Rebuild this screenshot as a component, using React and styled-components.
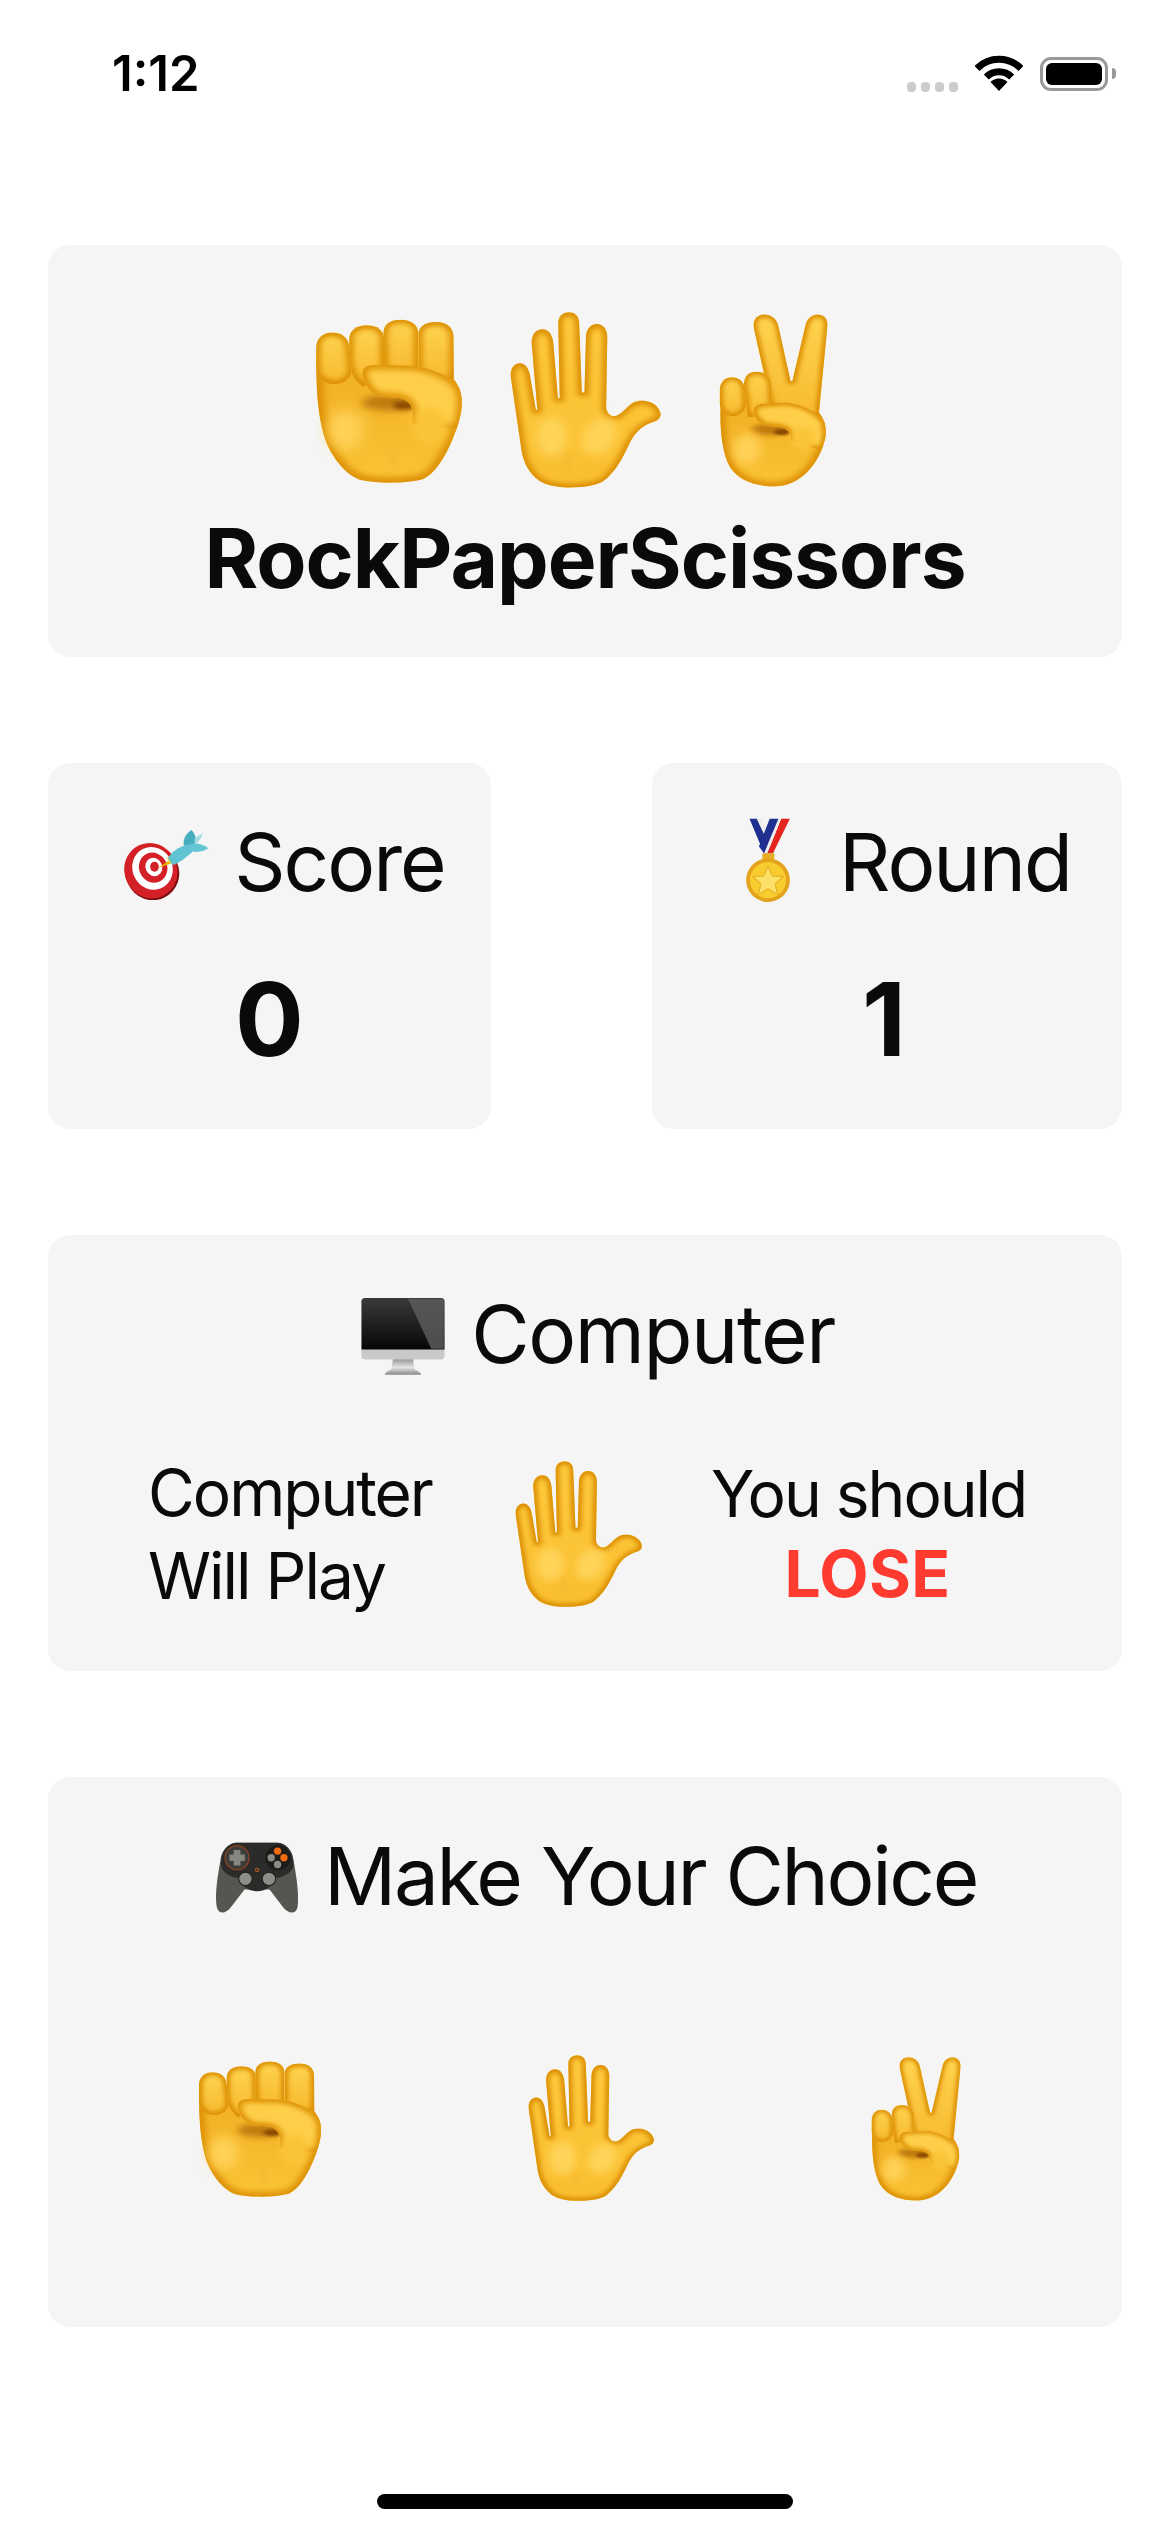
import React, { useId } from "react"
import styled, { createGlobalStyle } from "styled-components"

const GlobalStyle = createGlobalStyle`
  html, body { margin: 0; padding: 0; background: #fff; }
  body { font-family: "Inter", "Liberation Sans", sans-serif; color: #0a0a0a; }
`

const Page = styled.main`
  width: 1170px;
  height: 2532px;
  box-sizing: border-box;
  padding: 0 48px;
  display: flex;
  flex-direction: column;
  overflow: hidden;
`

// STATUS BAR
const StatusBar = styled.header`
  height: 245px;
  box-sizing: border-box;
  padding: 55px 7px 0 64px;
  display: flex;
  align-items: flex-start;
`
const Time = styled.span`
  font-size: 49px;
  line-height: 38px;
  font-weight: 600;
  letter-spacing: 0;
  color: #000;
`
const StatusIcons = styled.div`
  margin-left: auto;
  display: flex;
  align-items: flex-start;
`
const Dots = styled.div`
  display: flex;
  gap: 5px;
  margin: 27px 17px 0 0;
`
const Dot = styled.i`
  width: 9px;
  height: 10px;
  border-radius: 4px;
  background: #ccc;
`
const Battery = styled.div`
  position: relative;
  width: 68px;
  height: 34px;
  box-sizing: border-box;
  margin: 2px 7px 0 17px;
  border: 3.5px solid #999;
  border-radius: 11px;
  padding: 3px;
  &::after {
    content: "";
    position: absolute;
    right: -11px;
    top: 8px;
    width: 4px;
    height: 11px;
    border-radius: 0 4px 4px 0;
    background: #999;
  }
`
const BatteryFill = styled.div`
  height: 100%;
  border-radius: 6px;
  background: #000;
`

// CARDS
const Card = styled.section`
  height: ${(p) => p.$height}px;
  margin-bottom: ${(p) => p.$gap ?? 106}px;
  box-sizing: border-box;
  padding-top: ${(p) => p.$top}px;
  border-radius: 22px;
  background: #f5f5f5;
  display: flex;
  flex-direction: column;
  align-items: center;
`
const HandRow = styled.div`
  display: flex;
  align-items: center;
  gap: ${(p) => p.$gap}px;
  margin: ${(p) => p.$margin};
`
const Title = styled.h1`
  margin: 20px 0 0;
  font-size: 82px;
  line-height: 100px;
  font-weight: 700;
  letter-spacing: -1px;
`
const Stats = styled.div`
  display: flex;
  justify-content: space-between;
  margin-bottom: 106px;
`
const StatCard = styled.section`
  width: ${(p) => p.$width}px;
  height: 366px;
  box-sizing: border-box;
  padding-top: 53px;
  border-radius: 22px;
  background: #f5f5f5;
  display: flex;
  flex-direction: column;
  align-items: center;
`
const Heading = styled.h2`
  margin: 0;
  padding-left: ${(p) => p.$shift ?? 0}px;
  display: flex;
  align-items: center;
  gap: ${(p) => p.$gap}px;
  font-size: 80px;
  line-height: 92px;
  font-weight: 400;
  letter-spacing: ${(p) => p.$spacing ?? -2}px;
  white-space: nowrap;
`
const Value = styled.div`
  margin: 51px ${(p) => p.$nudge ?? 0}px 0 0;
  font-size: 102px;
  line-height: 120px;
  font-weight: 700;
`
const Verdict = styled.div`
  display: flex;
  align-items: center;
  align-self: flex-start;
  margin-top: 71px;
  padding-left: 100px;
`
const Lines = styled.div`
  width: ${(p) => p.$width}px;
  margin-bottom: ${(p) => p.$bottom ?? 0}px;
  font-size: 64px;
  line-height: 83px;
  letter-spacing: -2px;
  white-space: nowrap;
  text-align: ${(p) => p.$align};
`
const Lose = styled.div`
  padding-left: 4px;
  font-size: 64px;
  line-height: 78px;
  font-weight: 700;
  letter-spacing: 0.4px;
  color: #ff3b30;
`
const HomeBar = styled.div`
  width: 416px;
  height: 15px;
  margin: 167px auto 0;
  border-radius: 8px;
  background: #000;
`

// DRAWINGS
const Art = styled.svg`
  display: block;
  flex: none;
  margin: ${(p) => p.$top ?? 0}px 0 ${(p) => p.$bottom ?? 0}px ${(p) => p.$left ?? 0}px;
`

const Skin = ({ d, rim = 24, dark = "#DA8C05", top = "#FFD44F", low = "#F7B92F" }) => {
  const id = useId().replace(/[^a-zA-Z0-9]/g, "")
  return (
    <>
      <defs>
        <linearGradient id={`g${id}`} x1="0" y1="0" x2="0" y2="1">
          <stop offset="0" stopColor={top} />
          <stop offset="1" stopColor={low} />
        </linearGradient>
        <clipPath id={`c${id}`}><path d={d} /></clipPath>
        <filter id={`b${id}`} x="-20%" y="-20%" width="140%" height="140%">
          <feGaussianBlur stdDeviation={rim / 2.6} />
        </filter>
      </defs>
      <path d={d} fill={`url(#g${id})`} />
      <g clipPath={`url(#c${id})`}>
        <path d={d} fill="none" stroke={dark} strokeWidth={rim} filter={`url(#b${id})`} />
      </g>
    </>
  )
}

const Soft = ({ cx, cy, rx, ry, fill, blur = 8, rotate = 0 }) => {
  const id = useId().replace(/[^a-zA-Z0-9]/g, "")
  return (
    <>
      <filter id={`s${id}`} x="-60%" y="-60%" width="220%" height="220%">
        <feGaussianBlur stdDeviation={blur} />
      </filter>
      <ellipse cx={cx} cy={cy} rx={rx} ry={ry} fill={fill} filter={`url(#s${id})`}
        transform={`rotate(${rotate} ${cx} ${cy})`} />
    </>
  )
}

const Fist = ({ width, height, left }) => (
  <Art $left={left} width={width} height={height} viewBox="90 116 390 494" preserveAspectRatio="none">
    <Skin rim={30} top="#F0AE24" low="#FBC437" d="M94 230C92 320 98 400 112 460C125 520 170 590 215 602C260 612 330 612 375 598C415 580 455 490 472 410C482 360 478 325 450 290L200 230Z" />
    <Skin rim={22} d="M362 165C362 138 382 125 408 125C436 125 455 140 455 170L456 300L362 300Z" />
    <Skin rim={22} d="M270 160C270 132 288 118 316 118C344 118 362 134 362 160V280H272Z" />
    <Skin rim={22} d="M180 178C180 150 200 135 226 135C254 135 272 150 272 178V290L215 320C196 300 184 280 180 250Z" />
    <Skin rim={22} d="M93 205C93 175 110 157 136 157C160 157 178 172 180 200L187 268C186 296 166 312 140 312C112 312 95 290 93 262Z" />
    <Soft cx={285} cy={368} rx={72} ry={24} fill="#C07A0C" blur={11} />
    <Soft cx={325} cy={376} rx={30} ry={12} fill="#8A4A05" blur={6} />
    <Skin rim={24} top="#FFCE48" low="#FFD04C" d="M215 285C212 262 228 253 250 254L340 256C400 262 450 290 470 325C482 360 478 400 462 450L345 430C355 385 340 360 310 353L262 350C235 340 218 310 215 285Z" />
    <Soft cx={392} cy={440} rx={46} ry={58} fill="#FBC437" blur={12} />
    <Soft cx={170} cy={450} rx={46} ry={60} fill="#FFD156" blur={18} />
    <Soft cx={295} cy={535} rx={8} ry={30} fill="#F4B834" blur={9} />
  </Art>
)

const Palm = ({ width, height, left }) => (
  <Art $left={left} width={width} height={height} viewBox="600 96 400 532" preserveAspectRatio="none">
    <Skin rim={22} top="#FFCB40" low="#F9BE30" d="M630 510L602 290C600 265 612 250 626 250C640 250 650 265 653 290L668 390L672 390L657 190C656 165 668 148 685 148C702 148 712 165 714 190L726 355L731 355L727 130C727 110 738 97 755 97C772 97 782 110 782 130L789 338L796 338L800 170C801 148 812 132 828 132C846 132 856 150 856 170L853 385C856 402 866 412 880 408C896 402 908 378 925 368C945 358 975 362 990 385C1000 402 998 415 985 423C950 435 930 455 915 490C895 540 875 580 845 605C815 628 700 635 668 595C645 570 635 545 630 510Z" />
    <Soft cx={710} cy={470} rx={42} ry={60} fill="#FFD458" blur={14} />
    <Soft cx={835} cy={470} rx={42} ry={58} fill="#FFD458" blur={14} rotate={25} />
    <Soft cx={752} cy={545} rx={6} ry={28} fill="#F4B834" blur={8} />
  </Art>
)

const Victory = ({ width, height, left }) => (
  <Art $left={left} width={width} height={height} viewBox="1146 98 288 522" preserveAspectRatio="none">
    <Skin rim={18} d="M1285 380L1238 140C1230 88 1295 85 1303 135L1335 300L1340 300L1375 130C1385 85 1440 90 1432 140L1408 420Z" />
    <Skin rim={26} top="#F0AE24" low="#FBC437" d="M1150 380C1148 450 1155 520 1175 560C1200 605 1250 620 1300 618C1360 612 1400 560 1420 500C1432 450 1428 420 1410 395L1200 350Z" />
    <Skin rim={18} d="M1212 310C1212 285 1225 272 1245 272C1268 272 1282 288 1284 312L1286 400L1222 410Z" />
    <Skin rim={18} d="M1148 330C1148 305 1160 289 1180 289C1200 289 1214 305 1215 328L1217 370C1216 392 1200 406 1182 406C1162 406 1149 390 1148 368Z" />
    <Soft cx={1285} cy={446} rx={52} ry={18} fill="#C07A0C" blur={8} />
    <Soft cx={1312} cy={454} rx={22} ry={9} fill="#8A4A05" blur={4} />
    <Skin rim={18} top="#FFCE48" low="#FFD04C" d="M1238 395C1235 375 1250 368 1270 368L1320 364C1370 370 1410 395 1425 425C1432 460 1428 480 1415 510L1335 480C1340 450 1320 440 1300 438L1270 435C1250 425 1240 410 1238 395Z" />
    <Soft cx={1368} cy={475} rx={32} ry={36} fill="#FBC437" blur={9} />
    <Soft cx={1220} cy={505} rx={36} ry={44} fill="#FFD156" blur={13} />
  </Art>
)

const Dart = () => (
  <Art $top={6} width={85} height={70} viewBox="75 125 250 210">
    <ellipse cx={158} cy={254} rx={80} ry={82} fill="#7E0F12" transform="rotate(-25 158 254)" />
    <ellipse cx={153} cy={247} rx={79} ry={84} fill="#D42127" transform="rotate(-25 153 247)" />
    <ellipse cx={158} cy={240} rx={60} ry={65} fill="#fff" transform="rotate(-25 158 240)" />
    <ellipse cx={160} cy={238} rx={42} ry={46} fill="#D42127" transform="rotate(-25 160 238)" />
    <ellipse cx={162} cy={236} rx={25} ry={28} fill="#fff" transform="rotate(-25 162 236)" />
    <ellipse cx={164} cy={235} rx={13} ry={15} fill="#D42127" />
    <path d="M175 238L205 218L212 226Z" fill="#E9B400" />
    <path d="M200 205L228 228L212 226Z" fill="#F2C500" />
    <path d="M204 208C225 182 245 172 268 170L278 190C258 208 238 224 218 230Z" fill="#5FC3D2" />
    <path d="M252 172C248 150 260 135 275 125C284 135 292 150 288 170Z" fill="#47AEBF" />
    <path d="M268 168C285 162 310 166 325 180C310 192 285 194 266 186Z" fill="#62C6D4" />
    <path d="M285 150L308 135C306 150 296 162 284 168Z" fill="#A4DCE4" />
  </Art>
)

const Medal = () => (
  <Art $bottom={4} width={44} height={84} viewBox="142 85 130 250">
    <path d="M152 87H174L222 190H195Z" fill="#1E2F8F" />
    <path d="M174 87H187L232 190H222Z" fill="#EDEDED" />
    <path d="M272 87H246L205 190H222Z" fill="#E4261F" />
    <path d="M246 87H236L195 190H205Z" fill="#EDEDED" />
    <path d="M238 87H212L180 170L195 190Z" fill="#1E2F8F" />
    <rect x={190} y={190} width={36} height={18} rx={3} fill="#E6AE24" />
    <circle cx={207} cy={270} r={65} fill="#E2A21C" />
    <circle cx={207} cy={270} r={54} fill="#F8CC2F" />
    <path d="M207 228L220 258L252 260L228 281L236 313L207 296L178 313L186 281L162 260L194 258Z" fill="#FCE06A" stroke="#E5AE22" strokeWidth={3} />
  </Art>
)

const Imac = () => (
  <Art $top={6} width={84} height={78} viewBox="70 80 250 235">
    <defs>
      <linearGradient id="stand" x1="0" y1="0" x2="0" y2="1">
        <stop offset="0" stopColor="#8e8e8e" />
        <stop offset="0.55" stopColor="#e4e4e4" />
        <stop offset="1" stopColor="#8a8a8a" />
      </linearGradient>
      <linearGradient id="glass" x1="0" y1="0" x2="0" y2="1">
        <stop offset="0" stopColor="#3a3a3a" />
        <stop offset="1" stopColor="#060606" />
      </linearGradient>
    </defs>
    <path d="M165 262H225L230 295C240 300 248 304 250 311H140C142 304 150 300 160 295Z" fill="url(#stand)" />
    <rect x={70} y={80} width={250} height={185} rx={10} fill="#c9c9c9" />
    <path d="M70 90C70 84 74 80 80 80H310C316 80 320 84 320 90V235H70Z" fill="url(#glass)" />
    <path d="M210 82H310C315 82 318 85 318 90V233H280Z" fill="#5a5a5a" opacity="0.85" />
  </Art>
)

const Controller = () => (
  <Art $top={2} width={82} height={72} viewBox="55 15 245 215">
    <path d="M118 20C95 20 70 40 68 75C60 120 50 180 58 215C65 235 85 232 100 212L140 160H215L255 212C270 232 292 235 298 215C305 180 295 120 287 75C285 40 260 20 238 20Z" fill="#55564f" />
    <path d="M118 20C95 20 70 40 70 85C72 110 100 125 125 125C130 150 150 165 178 165C205 165 225 150 230 125C255 125 285 110 287 85C285 40 260 20 238 20Z" fill="#2b2c29" />
    <circle cx={118} cy={65} r={36} fill="#3c3d38" stroke="#A5451C" strokeWidth={3} />
    <path d="M108 42H128V55H141V75H128V88H108V75H95V55H108Z" fill="#84867f" />
    <circle cx={240} cy={65} r={38} fill="#1c1c1b" />
    <circle cx={239} cy={45} r={11} fill="#F06A0F" />
    <circle cx={258} cy={65} r={11} fill="#F06A0F" />
    <circle cx={220} cy={65} r={11} fill="#8a8a87" />
    <circle cx={239} cy={85} r={11} fill="#8a8a87" />
    <circle cx={178} cy={101} r={5} fill="none" stroke="#C9581A" strokeWidth={3} />
    <circle cx={143} cy={128} r={20} fill="#8c8e88" stroke="#1c1c1b" strokeWidth={3} />
    <circle cx={213} cy={128} r={20} fill="#8c8e88" stroke="#1c1c1b" strokeWidth={3} />
  </Art>
)

const Wifi = () => (
  <Art width={48} height={36} viewBox="0 0 48 36">
    <path d="M2 13.5A31 31 0 0 1 46 13.5" fill="none" stroke="#000" strokeWidth={7} />
    <path d="M11.3 22A18 18 0 0 1 36.7 22" fill="none" stroke="#000" strokeWidth={7} />
    <path d="M24 36L15.5 27A12 12 0 0 1 32.5 27Z" fill="#000" />
  </Art>
)

export default function App() {
  return (
    <>
      <GlobalStyle />
      <Page>
        <StatusBar>
          <Time>1:12</Time>
          <StatusIcons>
            <Dots><Dot /><Dot /><Dot /><Dot /></Dots>
            <Wifi />
            <Battery><BatteryFill /></Battery>
          </StatusIcons>
        </StatusBar>

        <Card $height={412} $top={67}>
          <HandRow $gap={47} $margin="0 27px 0 0">
            <Fist width={148} height={164} />
            <Palm width={152} height={177} />
            <Victory width={109} height={173} left={10} />
          </HandRow>
          <Title>RockPaperScissors</Title>
        </Card>

        <Stats>
          <StatCard $width={443}>
            <Heading $gap={25} $shift={30}><Dart />Score</Heading>
            <Value>0</Value>
          </StatCard>
          <StatCard $width={470}>
            <Heading $gap={49} $shift={43}><Medal />Round</Heading>
            <Value $nudge={6}>1</Value>
          </StatCard>
        </Stats>

        <Card $height={436} $top={53}>
          <Heading $gap={26} $shift={26} $spacing={-1.4}><Imac />Computer</Heading>
          <Verdict>
            <Lines $width={282} $align="left">Computer<br />Will Play</Lines>
            <HandRow $gap={0} $margin="0 68px 0 85px"><Palm width={128} height={147} /></HandRow>
            <Lines $width={309} $align="center" $bottom={4}>You should<Lose>LOSE</Lose></Lines>
          </Verdict>
        </Card>

        <Card $height={550} $top={53} $gap={0}>
          <Heading $gap={26} $shift={23} $spacing={-2.3}><Controller />Make Your Choice</Heading>
          <HandRow $gap={206} $margin="133px 11px 0 0">
            <Fist width={124} height={136} />
            <Palm width={127} height={147} />
            <Victory width={90} height={144} left={10} />
          </HandRow>
        </Card>

        <HomeBar />
      </Page>
    </>
  )
}
